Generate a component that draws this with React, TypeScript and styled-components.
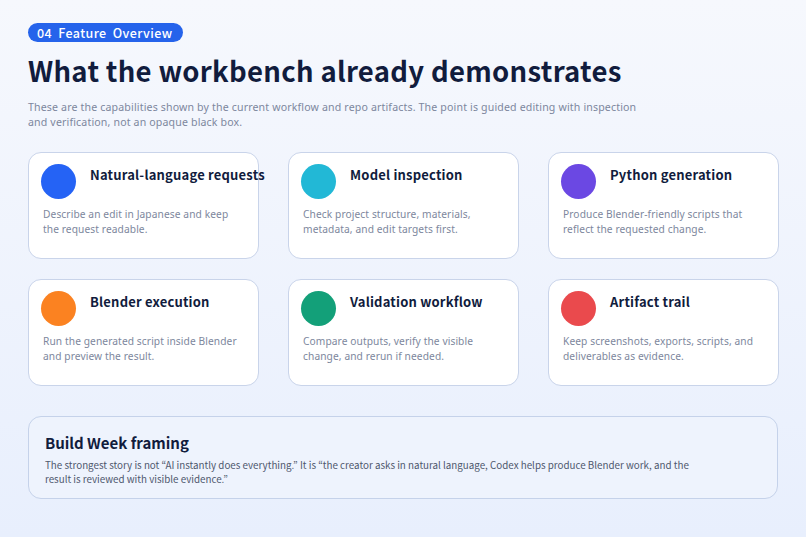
import styled, { createGlobalStyle } from 'styled-components'

const Global = createGlobalStyle`
  html, body { margin: 0; padding: 0; }
  body {
    font-family: "Noto Sans CJK JP", "Noto Sans", sans-serif;
    background: linear-gradient(180deg, #f6f8fd 0%, #e8effd 100%);
    width: 806px;
    height: 537px;
    overflow: hidden;
  }
`

const Page = styled.div`
  padding: 23px 28px 0 28px;
  display: flex;
  flex-direction: column;
`

const Badge = styled.div`
  align-self: flex-start;
  background: #2563eb;
  color: #fff;
  font-size: 12.5px;
  font-weight: 500;
  height: 19px;
  line-height: 19px;
  padding: 0 11px 0 9px;
  border-radius: 10px;
  letter-spacing: 0.4px;
  word-spacing: 3px;
`

const Title = styled.h1`
  margin: 8px 0 0;
  font-size: 27.5px;
  font-weight: 700;
  color: #111c3d;
  letter-spacing: 0.3px;
  line-height: 40px;
`

const Lead = styled.p`
  margin: 10px 0 0;
  font-family: "Noto Sans", sans-serif;
  font-size: 10.6px;
  line-height: 15px;
  color: #7d879d;
  max-width: 610px;
  letter-spacing: 0.15px;
`

const Grid = styled.div`
  margin-top: 22px;
  display: grid;
  grid-template-columns: repeat(3, 231px);
  column-gap: 29px;
  row-gap: 20px;
`

const Card = styled.div`
  height: 107px;
  box-sizing: border-box;
  background: #fff;
  border: 1px solid #c9d4ea;
  border-radius: 13px;
  padding: 11px 12px 0 12px;
`

const Top = styled.div`
  display: flex;
  align-items: flex-start;
  column-gap: 14px;
`

const Dot = styled.div<{ $color: string }>`
  width: 35px;
  height: 35px;
  border-radius: 50%;
  background: ${p => p.$color};
  flex-shrink: 0;
`

const CardTitle = styled.div`
  margin-top: 1px;
  font-size: 13px;
  font-weight: 700;
  color: #111c3d;
  white-space: nowrap;
  letter-spacing: 0.2px;
`

const CardText = styled.p`
  margin: 8px 0 0 2px;
  font-family: "Noto Sans", sans-serif;
  font-size: 10.2px;
  line-height: 14.5px;
  color: #7d879d;
  max-width: 200px;
  letter-spacing: 0.1px;
`

const Framing = styled.div`
  margin-top: 30px;
  box-sizing: border-box;
  height: 83px;
  background: #eef3fd;
  border: 1px solid #c5d2ea;
  border-radius: 13px;
  padding: 16px 16px 0 16px;
`

const FramingTitle = styled.div`
  font-size: 15px;
  font-weight: 700;
  color: #111c3d;
  line-height: 20px;
`

const FramingText = styled.p`
  margin: 5px 0 0;
  font-size: 9.8px;
  line-height: 14px;
  color: #4e586e;
  max-width: 670px;
`

const items = [
  { c: '#2563f5', t: 'Natural-language requests', d: 'Describe an edit in Japanese and keep the request readable.' },
  { c: '#22b8d6', t: 'Model inspection', d: 'Check project structure, materials, metadata, and edit targets first.' },
  { c: '#6b48e3', t: 'Python generation', d: 'Produce Blender-friendly scripts that reflect the requested change.' },
  { c: '#fb8221', t: 'Blender execution', d: 'Run the generated script inside Blender and preview the result.' },
  { c: '#13a079', t: 'Validation workflow', d: 'Compare outputs, verify the visible change, and rerun if needed.' },
  { c: '#ea4a4d', t: 'Artifact trail', d: 'Keep screenshots, exports, scripts, and deliverables as evidence.' },
]

export default function App() {
  return (
    <>
      <Global />
      <Page>
        <Badge>04 Feature Overview</Badge>
        <Title>What the workbench already demonstrates</Title>
        <Lead>
          These are the capabilities shown by the current workflow and repo artifacts. The point is guided editing with
          inspection and verification, not an opaque black box.
        </Lead>
        <Grid>
          {items.map(it => (
            <Card key={it.t}>
              <Top>
                <Dot $color={it.c} />
                <CardTitle>{it.t}</CardTitle>
              </Top>
              <CardText>{it.d}</CardText>
            </Card>
          ))}
        </Grid>
        <Framing>
          <FramingTitle>Build Week framing</FramingTitle>
          <FramingText>
            The strongest story is not “AI instantly does everything.” It is “the creator asks in natural language, Codex
            helps produce Blender work, and the result is reviewed with visible evidence.”
          </FramingText>
        </Framing>
      </Page>
    </>
  )
}
